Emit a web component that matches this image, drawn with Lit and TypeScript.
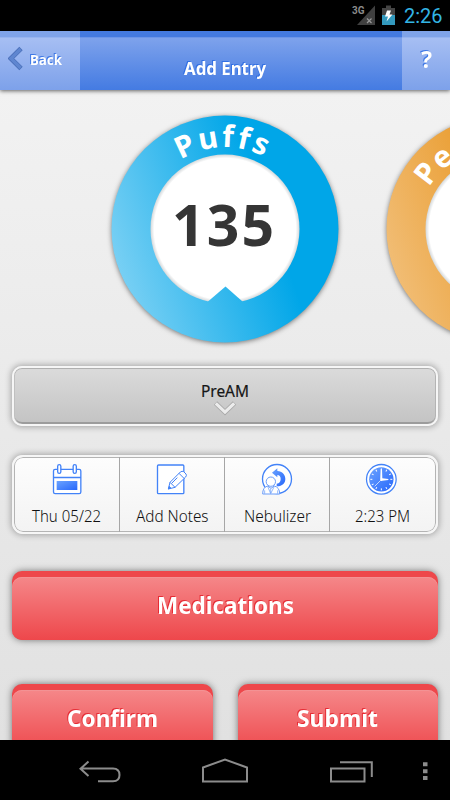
import { LitElement, html, svg, css } from "lit";
import { customElement } from "lit/decorators.js";

/** One line of text fitted to a given width, baseline at `base` inside a box of height `h`. */
const line = (cls: string, text: string, w: number, h: number, base: number) => html`
  <svg class="line" width=${w} height=${h}>
    <text class=${cls} x="0" y=${base} textLength=${w} lengthAdjust="spacingAndGlyphs">${text}</text>
  </svg>`;

const ticks = Array.from({ length: 12 }, (_, i) => i * 30);

const calendarIcon = html`<svg class="icon" viewBox="153 54 96 96">
  <defs><linearGradient id="cal" x1="0" y1="0" x2="1" y2="1"><stop offset="0" stop-color="#6ba3ff"/><stop offset="1" stop-color="#2767fb"/></linearGradient></defs>
  <g fill="#fff" stroke="#4383f8" stroke-width="4">
    <rect x="160.500" y="73" width="82" height="73" rx="5"/>
    <path d="M160 97.500H243"/>
    <rect x="173" y="59" width="9.500" height="26" rx="4.700"/>
    <rect x="219.500" y="59" width="9.500" height="26" rx="4.700"/>
  </g>
  <rect x="170" y="108" width="62" height="27" fill="url(#cal)"/>
</svg>`;

const notesIcon = html`<svg class="icon" viewBox="468 54 96 96">
  <g fill="#fff" stroke="#4383f8" stroke-width="4" stroke-linejoin="round">
    <rect x="472.500" y="60" width="79" height="86" rx="3"/>
    <g stroke-width="3">
      <path d="M505 132L510 112L541 81Q546 77 551 80L558 87Q561 91 557 96L525 127Z"/>
      <path d="M510 112L525 127M537 85L553 101M532 98L515 115" fill="none"/>
      <path d="M505 132L508 124L512 129Z" fill="#4383f8"/>
    </g>
  </g>
</svg>`;

const nebulizerIcon = html`<svg class="icon" viewBox="108 54 96 96">
  <defs><linearGradient id="neb" x1="0" y1="0" x2="1" y2="1"><stop offset="0" stop-color="#6ba3ff"/><stop offset="1" stop-color="#2767fb"/></linearGradient></defs>
  <circle cx="156" cy="102" r="43.500" fill="#fff" stroke="#4383f8" stroke-width="4"/>
  <path d="M141 83L157 70V78C172 78 181 90 181 102C181 115 170 125 155 124V116C163 116 167 109 167 102C167 94 163 90 157 90V97Z" fill="url(#neb)"/>
  <g fill="#fff" stroke="#6b9df9" stroke-width="3">
    <path d="M113 147Q113 127 128 123L138 130L148 123Q164 127 164 147Z"/>
    <circle cx="137.500" cy="110" r="14"/>
    <path d="M128 124L137 146L148 124M137 131V144M119 136V146M158 136V146" fill="none" stroke-width="2.200"/>
  </g>
</svg>`;

const clockIcon = html`<svg class="icon" viewBox="425 54 96 96">
  <defs><linearGradient id="clk" x1="0" y1="0" x2="1" y2="1"><stop offset="0" stop-color="#6ba3ff"/><stop offset="1" stop-color="#2767fb"/></linearGradient></defs>
  <circle cx="471" cy="103" r="44.500" fill="#fff" stroke="#4383f8" stroke-width="3.800"/>
  <circle cx="471" cy="103" r="36.500" fill="url(#clk)"/>
  ${ticks.map((a) => svg`<path d="M471 70V76" stroke="#fff" stroke-width="3" transform="rotate(${a} 471 103)"/>`)}
  <path d="M467.500 104L469 73H473L474 100L492 102V105L474 107Q470 110 467.500 104Z" fill="#fff"/>
  <path d="M470 105L451 124" stroke="#fff" stroke-width="2"/>
</svg>`;

@customElement("ring-dial")
class RingDial extends LitElement {
  static properties = { label: {}, value: {}, tone: {}, span: { type: Number }, start: { type: Number } };
  declare label: string;
  declare value: string;
  declare tone: string;
  declare span: number;
  declare start: number;

  static styles = css`
    :host { display: block; width: 228px; height: 228px; flex: none; }
    svg { display: block; overflow: visible; }
    .disc { filter: drop-shadow(0 1px 2.5px rgba(0, 0, 0, .5)); }
    .name { font: 700 30px "Noto Sans", "Open Sans", sans-serif; fill: #fff; }
    .value { font: 700 57px "Noto Sans", "Open Sans", sans-serif; fill: #353535; }
  `;

  render() {
    const [light, full] = this.tone === "orange" ? ["#f1bd75", "#e79117"] : ["#79d0f4", "#00a6e8"];
    const a = (this.start * Math.PI) / 180;
    const r = 82;
    const x = 114 + r * Math.sin(a);
    const y = 114 - r * Math.cos(a);
    return html`<svg width="228" height="228">
      <defs>
        <linearGradient id="g" gradientUnits="userSpaceOnUse" x1="4" y1="152" x2="158" y2="98">
          <stop offset="0" stop-color=${light}/><stop offset="1" stop-color=${full}/>
        </linearGradient>
        <radialGradient id="in"><stop offset=".95" stop-color="#fff"/><stop offset="1" stop-color="#d4d8da"/></radialGradient>
        <path id="arc" d="M${x} ${y}A${r} ${r} 0 0 1 ${114 + r} 114"/>
      </defs>
      <circle class="disc" cx="114" cy="114" r="113.500" fill="url(#g)"/>
      <circle cx="114" cy="114" r="74.500" fill="url(#in)"/>
      <path d="M97 186.500L114.500 171.500L131.500 186.500V191H97Z" fill="url(#g)"/>
      <text class="name" letter-spacing=${this.span}><textPath href="#arc">${this.label}</textPath></text>
      ${this.value ? svg`<text class="value" x="61" y="131" textLength="102" lengthAdjust="spacing">${this.value}</text>` : ""}
    </svg>`;
  }
}

@customElement("app-root")
class AppRoot extends LitElement {
  static styles = css`
    :host { display: flex; flex-direction: column; width: 450px; height: 800px; overflow: hidden; background: #000; font-family: "Noto Sans", "Open Sans", sans-serif; }
    * { box-sizing: border-box; }
    svg { display: block; flex: none; }
    .line { overflow: visible; }

    .status { height: 31px; flex: none; display: flex; justify-content: flex-end; padding-right: 8px; }
    .sig { font: 700 10.5px "Roboto", sans-serif; fill: #8b8b8b; }
    .clock { font: 400 20px "Roboto", sans-serif; fill: #33b5e5; }

    .header { height: 59px; flex: none; display: grid; grid-template-columns: 80px 1fr 48px; position: relative; box-shadow: 0 1px 4px rgba(0, 0, 0, .6); }
    .bar { border-top: 6px solid #447adf; background: linear-gradient(#7fa3ec, #447be2) padding-box; box-shadow: inset 0 1px 0 #6c95e8; display: flex; justify-content: center; }
    .side { border-top-color: #7fa3e8; background: linear-gradient(#a7bff3, #7da1ea) padding-box; box-shadow: inset 0 1px 0 #96b3ee; }
    .back { justify-content: flex-start; gap: 7px; padding: 9px 0 0 8px; }
    .help { padding-top: 8px; }
    .title { padding-top: 19px; padding-right: 32px; }
    .t-back { font-weight: 700; font-size: 15px; fill: #fff; }
    .t-title { font-weight: 700; font-size: 17.5px; fill: #fff; }
    .t-help { font-weight: 700; font-size: 23px; fill: #fff; }
    .header .line { filter: drop-shadow(-1px -1px 0 rgba(37, 104, 226, .8)); }

    .content { flex: 1; min-height: 0; overflow: hidden; background: linear-gradient(#f2f2f2, #e1e1e1); }
    .dials { display: flex; gap: 47px; padding: 24.500px 0 0 111px; height: 276px; overflow: hidden; }

    .frame { margin: 0 12px; border: 2px solid #f6f6f6; border-radius: 11px; box-shadow: 0 0 6px 1px rgba(0, 0, 0, .3); overflow: hidden; }
    .picker { height: 60px; background: linear-gradient(#dbdbdb, #c3c3c3); border-radius: 10px; display: flex; flex-direction: column; align-items: center; padding-top: 13px; box-shadow: 0 0 6px 1px rgba(0, 0, 0, .3), inset 0 1px 0 #b0b0b0, inset 1px 0 0 #c0c0c0, inset -1px 0 0 #b4b4b4, inset 0 -2px 0 #9c9c9c; }
    .t-pick { font-size: 16.800px; fill: #161616; stroke: #161616; stroke-width: .2px; }

    .tiles { height: 79px; margin-top: 29px; display: grid; grid-template-columns: 106px 105px 105px 1fr; background: linear-gradient(#fdfdfd, #f3f3f3); box-shadow: 0 0 6px 1px rgba(0, 0, 0, .3), inset 0 0 0 1px #b4b4b4; }
    .tile { display: flex; flex-direction: column; align-items: center; padding-top: 6px; gap: 10px; border-right: 1px solid #a6a6a6; }
    .tile:last-child { border-right: none; padding-right: 2px; }
    .icon { width: 32px; height: 32px; overflow: visible; }
    .t-tile { font-weight: 300; font-size: 15.800px; fill: #111; }

    .red { height: 69px; border-radius: 10px; background: #ee474b; box-shadow: 0 0 7px rgba(0, 0, 0, .5); padding-top: 6px; }
    .face { height: 63px; border-radius: 10px; background: linear-gradient(#f58789, #ee474b); box-shadow: inset 0 1px 0 #f39294; display: flex; justify-content: center; padding-top: 18px; }
    .face .line { filter: drop-shadow(-1px -1px 0 rgba(226, 22, 32, .75)); }
    .t-red { font-weight: 700; font-size: 22.500px; fill: #fff; }
    .meds { margin: 37px 12px 44px; }
    .pair { display: grid; grid-template-columns: 1fr 1fr; gap: 25px; padding: 0 12px; }

    .nav { height: 60px; flex: none; background: #000; }
    .nav svg { fill: none; stroke: #8c8c8c; stroke-width: 2; }
  `;

  render() {
    return html`
      <div class="status">
        <svg width="92" height="31">
          <text class="sig" x="2" y="14.300" textLength="12.500" lengthAdjust="spacingAndGlyphs">3G</text>
          <path d="M7 25L25 5.500V25Z" fill="#404040"/>
          <path d="M17 18.500L21.500 23M21.500 18.500L17 23" stroke="#999" stroke-width="1.200"/>
          <path d="M32 8H36V5.500H41V8H45V15H32Z" fill="#444"/>
          <path d="M32 15H45V25H32Z" fill="#3399bd"/>
          <path d="M37 10.500H41L39.500 14.500H42.500L36.500 21.500L38 16.500H35Z" fill="#fff"/>
          <text class="clock" x="54" y="23" textLength="38.500" lengthAdjust="spacingAndGlyphs">2:26</text>
        </svg>
      </div>

      <div class="header">
        <div class="bar side back">
          <svg width="15" height="26" viewBox="0 0 15 26"><path d="M13 2.500L2.800 12.500L13 22.500" fill="none" stroke="#4a6fb8" stroke-width="4.800"/><path d="M12.600 3L3 12.500L12.600 22" fill="none" stroke="#5f86d0" stroke-width="3.300"/></svg>
          ${line("t-back", "Back", 32, 24, 19)}
        </div>
        <div class="bar"><div class="title">${line("t-title", "Add Entry", 82, 24, 19)}</div></div>
        <div class="bar side help">${line("t-help", "?", 11, 26, 23)}</div>
      </div>

      <div class="content">
        <div class="dials">
          <ring-dial label="Puffs" value="135" tone="blue" .span=${2.6} .start=${-32.5}></ring-dial>
          <ring-dial label="Pe" value="" tone="orange" .span=${1.6} .start=${-59.5}></ring-dial>
        </div>

        <div class="frame picker">
          ${line("t-pick", "PreAM", 48, 20, 15.5)}
          <svg width="24" height="15" viewBox="0 0 24 15"><path d="M2.500 2L12 11.200L21.500 2" fill="none" stroke="#a9a9a9" stroke-width="4.800"/><path d="M2.800 2.300L12 11.200L21.200 2.300" fill="none" stroke="#ececec" stroke-width="3.100"/></svg>
        </div>

        <div class="frame tiles">
          <div class="tile">${calendarIcon}${line("t-tile", "Thu 05/22", 69, 20, 16.5)}</div>
          <div class="tile">${notesIcon}${line("t-tile", "Add Notes", 72.5, 20, 16.5)}</div>
          <div class="tile">${nebulizerIcon}${line("t-tile", "Nebulizer", 67, 20, 16.5)}</div>
          <div class="tile">${clockIcon}${line("t-tile", "2:23 PM", 55, 20, 16.5)}</div>
        </div>

        <div class="red meds"><div class="face">${line("t-red", "Medications", 137, 26, 19)}</div></div>
        <div class="pair">
          <div class="red"><div class="face">${line("t-red", "Confirm", 91, 26, 19)}</div></div>
          <div class="red"><div class="face">${line("t-red", "Submit", 81, 26, 19)}</div></div>
        </div>
      </div>

      <div class="nav">
        <svg width="450" height="60">
          <path d="M88.500 21.500L80.500 28.700L88.500 36M81 28.500H113Q119.500 28.500 119.500 35Q119.500 41.300 113 41.300H98"/>
          <path d="M203 41.500V27.500L225 19.500L247 27.500V41.500Z"/>
          <path d="M331 28.500H364.500V41.500H331ZM340 22.200H371.800V37"/>
          <path d="M423 22.300H427.500V26.300H423ZM423 29.300H427.500V33.300H423ZM423 36H427.500V40H423Z" fill="#8c8c8c" stroke="none"/>
        </svg>
      </div>
    `;
  }
}
